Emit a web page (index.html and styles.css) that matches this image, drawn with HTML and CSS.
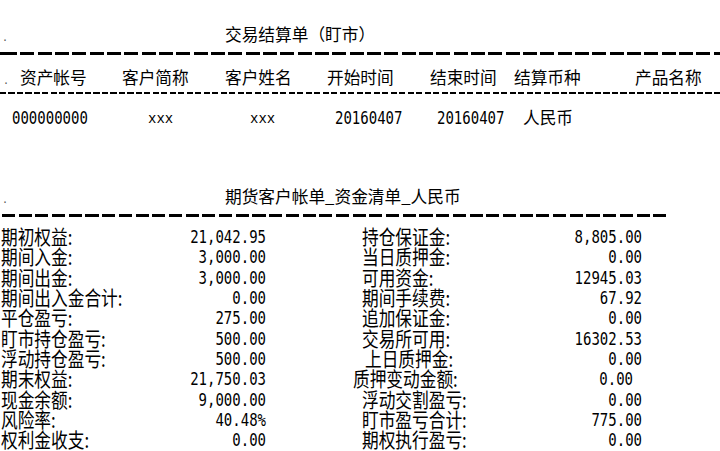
FILE: index.html
```html
<!DOCTYPE html>
<html lang="zh-CN">
<head>
<meta charset="utf-8">
<title>交易结算单</title>
<link rel="stylesheet" href="styles.css">
</head>
<body>
<div class="page">
  <div class="title-row">
    <span class="dot">.</span>
    <span class="title">交易结算单（盯市）</span>
  </div>
  <div class="rule-thick"></div>
  <div class="head-row">
    <span class="dot hd">.</span>
    <span class="h h1">资产帐号</span>
    <span class="h h2">客户简称</span>
    <span class="h h3">客户姓名</span>
    <span class="h h4">开始时间</span>
    <span class="h h5">结束时间</span>
    <span class="h h6">结算币种</span>
    <span class="h h7">产品名称</span>
  </div>
  <div class="rule-thin"></div>
  <div class="data-row">
    <span class="d d1"><span class="num">000000000</span></span>
    <span class="d d2"><span class="mono">xxx</span></span>
    <span class="d d3"><span class="mono">xxx</span></span>
    <span class="d d4"><span class="num">20160407</span></span>
    <span class="d d5"><span class="num">20160407</span></span>
    <span class="d d6 cjk">人民币</span>
  </div>
  <div class="title-row title2">
    <span class="dot">.</span>
    <span class="title">期货客户帐单_资金清单_人民币</span>
  </div>
  <div class="rule-thick short"></div>
  <div class="ledger">
    <span class="lab">期初权益:</span><span class="val"><span class="num">21,042.95</span></span>
    <span class="lab r">持仓保证金:</span><span class="val"><span class="num">8,805.00</span></span>

    <span class="lab">期间入金:</span><span class="val"><span class="num">3,000.00</span></span>
    <span class="lab r">当日质押金:</span><span class="val"><span class="num">0.00</span></span>

    <span class="lab">期间出金:</span><span class="val"><span class="num">3,000.00</span></span>
    <span class="lab r">可用资金:</span><span class="val"><span class="num">12945.03</span></span>

    <span class="lab">期间出入金合计:</span><span class="val"><span class="num">0.00</span></span>
    <span class="lab r">期间手续费:</span><span class="val"><span class="num">67.92</span></span>

    <span class="lab">平仓盈亏:</span><span class="val"><span class="num">275.00</span></span>
    <span class="lab r">追加保证金:</span><span class="val"><span class="num">0.00</span></span>

    <span class="lab">盯市持仓盈亏:</span><span class="val"><span class="num">500.00</span></span>
    <span class="lab r">交易所可用:</span><span class="val"><span class="num">16302.53</span></span>

    <span class="lab">浮动持仓盈亏:</span><span class="val"><span class="num">500.00</span></span>
    <span class="lab r shift-r">上日质押金:</span><span class="val"><span class="num">0.00</span></span>

    <span class="lab">期末权益:</span><span class="val"><span class="num">21,750.03</span></span>
    <span class="lab r shift-l">质押变动金额:</span><span class="val shift-l"><span class="num">0.00</span></span>

    <span class="lab">现金余额:</span><span class="val"><span class="num">9,000.00</span></span>
    <span class="lab r">浮动交割盈亏:</span><span class="val"><span class="num">0.00</span></span>

    <span class="lab">风险率:</span><span class="val"><span class="num">40.48%</span></span>
    <span class="lab r">盯市盈亏合计:</span><span class="val"><span class="num">775.00</span></span>

    <span class="lab">权利金收支:</span><span class="val"><span class="num">0.00</span></span>
    <span class="lab r">期权执行盈亏:</span><span class="val"><span class="num">0.00</span></span>
  </div>
</div>
</body>
</html>
```
FILE: styles.css
```css
* { box-sizing: border-box; margin: 0; padding: 0; }
html, body { background: #fff; }
body {
  width: 720px;
  height: 451px;
  overflow: hidden;
  font-family: "Noto Sans CJK SC", sans-serif;
  color: #000;
}
.page { width: 720px; }

.cjk { font-family: "Noto Sans CJK SC", sans-serif; font-size: 16.7px; }
.num {
  font-family: "DejaVu Sans Mono", monospace;
  font-size: 14px;
  display: inline-block;
  transform: scaleY(1.25);
  letter-spacing: 0;
}
.mono {
  font-family: "Liberation Mono", monospace;
  font-size: 14px;
}
.dot {
  font-family: "DejaVu Sans Mono", monospace;
  font-size: 10px;
  color: #555;
}

/* titles */
.title-row {
  display: flex;
  align-items: baseline;
  height: 52px;
  padding-top: 24px;
  line-height: 20px;
}
.title-row .dot { width: 225px; padding-left: 2px; }
.title { font-size: 16.7px; }
.title2 { height: 84px; padding-top: 56px; }

/* rules */
.rule-thick {
  height: 3px;
  background: repeating-linear-gradient(90deg, #000 0 14px, transparent 14px 17.33px);
  background-position: 3px 0;
}
.rule-thick.short {
  width: 667px;
  background: repeating-linear-gradient(90deg, #000 0 13px, transparent 13px 16.7px);
  background-position: 2px 0;
}
.rule-thin {
  height: 2px;
  background: repeating-linear-gradient(90deg, #000 0 6px, transparent 6px 8.5px);
}

/* header row */
.head-row {
  display: flex;
  align-items: baseline;
  height: 37px;
  padding-top: 12px;
  line-height: 20px;
  font-size: 16.7px;
}
.head-row .hd { width: 20px; padding-left: 3px; }
.h { white-space: nowrap; }
.h1 { width: 102px; }
.h2 { width: 103px; }
.h3 { width: 102px; }
.h4 { width: 103px; }
.h5 { width: 84px; }
.h6 { width: 121px; }

/* data row */
.data-row {
  display: flex;
  align-items: center;
  height: 36px;
  padding-top: 13px;
  padding-bottom: 3px;
  padding-left: 12px;
  line-height: 20px;
}
.d { white-space: nowrap; }
.d1 { width: 136px; }
.d2 { width: 102px; }
.d3 { width: 85px; }
.d4 { width: 102px; }
.d5 { width: 86px; }

/* ledger */
.ledger {
  margin-top: 9px;
  display: grid;
  grid-template-columns: 180px 86px 214px 162px;
  grid-auto-rows: 20.3px;
  align-items: center;
}
.lab {
  display: inline-block;
  font-size: 16.7px;
  line-height: 20px;
  white-space: nowrap;
  padding-left: 1px;
  transform: scaleY(1.22);
}
.lab.r { padding-left: 96px; }
.lab.r.shift-r { padding-left: 99px; }
.lab.r.shift-l { padding-left: 87px; }
.val {
  text-align: right;
  line-height: 20px;
  white-space: nowrap;
}
.val.shift-l { padding-right: 9px; }
```
